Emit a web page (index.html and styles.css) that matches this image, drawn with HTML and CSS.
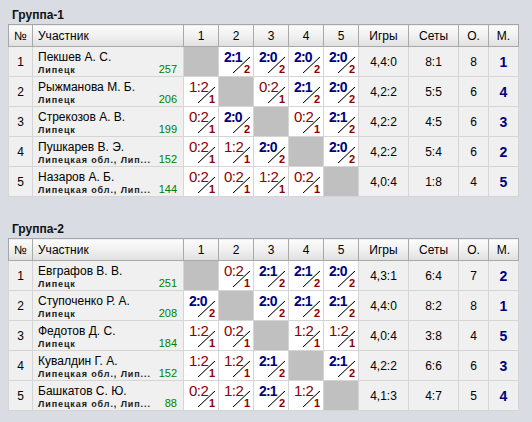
FILE: index.html
```html
<!DOCTYPE html>
<html lang="ru">
<head>
<meta charset="utf-8">
<title>Группы</title>
<link rel="stylesheet" href="styles.css">
</head>
<body>
<div class="page">
  <section class="group">
    <h2 class="title">Группа-1</h2>
    <table class="grid">
      <colgroup>
        <col class="c-num"><col class="c-name">
        <col class="c-sc"><col class="c-sc"><col class="c-sc"><col class="c-sc"><col class="c-sc">
        <col class="c-stat"><col class="c-stat"><col class="c-small"><col class="c-small">
      </colgroup>
      <thead>
        <tr><th>№</th><th class="h-name">Участник</th><th>1</th><th>2</th><th>3</th><th>4</th><th>5</th><th>Игры</th><th>Сеты</th><th>О.</th><th class="last">М.</th></tr>
      </thead>
      <tbody>
        <tr>
          <td class="num">1</td>
          <td class="player"><div class="pname">Пекшев А. С.</div><div class="pinfo"><span class="city">Липецк</span><span class="rating">257</span></div></td>
          <td class="self"></td>
          <td class="sc"><div class="cell win"><span class="res">2:1</span><span class="slash"></span><span class="pts">2</span></div></td>
          <td class="sc"><div class="cell win"><span class="res">2:0</span><span class="slash"></span><span class="pts">2</span></div></td>
          <td class="sc"><div class="cell win"><span class="res">2:0</span><span class="slash"></span><span class="pts">2</span></div></td>
          <td class="sc"><div class="cell win"><span class="res">2:0</span><span class="slash"></span><span class="pts">2</span></div></td>
          <td class="stat">4,4:0</td><td class="stat">8:1</td><td class="stat">8</td><td class="stat place">1</td>
        </tr>
        <tr>
          <td class="num">2</td>
          <td class="player"><div class="pname">Рыжманова М. Б.</div><div class="pinfo"><span class="city">Липецк</span><span class="rating">206</span></div></td>
          <td class="sc"><div class="cell loss"><span class="res">1:2</span><span class="slash"></span><span class="pts">1</span></div></td>
          <td class="self"></td>
          <td class="sc"><div class="cell loss"><span class="res">0:2</span><span class="slash"></span><span class="pts">1</span></div></td>
          <td class="sc"><div class="cell win"><span class="res">2:1</span><span class="slash"></span><span class="pts">2</span></div></td>
          <td class="sc"><div class="cell win"><span class="res">2:0</span><span class="slash"></span><span class="pts">2</span></div></td>
          <td class="stat">4,2:2</td><td class="stat">5:5</td><td class="stat">6</td><td class="stat place">4</td>
        </tr>
        <tr>
          <td class="num">3</td>
          <td class="player"><div class="pname">Стрекозов А. В.</div><div class="pinfo"><span class="city">Липецк</span><span class="rating">199</span></div></td>
          <td class="sc"><div class="cell loss"><span class="res">0:2</span><span class="slash"></span><span class="pts">1</span></div></td>
          <td class="sc"><div class="cell win"><span class="res">2:0</span><span class="slash"></span><span class="pts">2</span></div></td>
          <td class="self"></td>
          <td class="sc"><div class="cell loss"><span class="res">0:2</span><span class="slash"></span><span class="pts">1</span></div></td>
          <td class="sc"><div class="cell win"><span class="res">2:1</span><span class="slash"></span><span class="pts">2</span></div></td>
          <td class="stat">4,2:2</td><td class="stat">4:5</td><td class="stat">6</td><td class="stat place">3</td>
        </tr>
        <tr>
          <td class="num">4</td>
          <td class="player"><div class="pname">Пушкарев В. Э.</div><div class="pinfo"><span class="city">Липецкая обл., Лип...</span><span class="rating">152</span></div></td>
          <td class="sc"><div class="cell loss"><span class="res">0:2</span><span class="slash"></span><span class="pts">1</span></div></td>
          <td class="sc"><div class="cell loss"><span class="res">1:2</span><span class="slash"></span><span class="pts">1</span></div></td>
          <td class="sc"><div class="cell win"><span class="res">2:0</span><span class="slash"></span><span class="pts">2</span></div></td>
          <td class="self"></td>
          <td class="sc"><div class="cell win"><span class="res">2:0</span><span class="slash"></span><span class="pts">2</span></div></td>
          <td class="stat">4,2:2</td><td class="stat">5:4</td><td class="stat">6</td><td class="stat place">2</td>
        </tr>
        <tr>
          <td class="num">5</td>
          <td class="player"><div class="pname">Назаров А. Б.</div><div class="pinfo"><span class="city">Липецкая обл., Лип...</span><span class="rating">144</span></div></td>
          <td class="sc"><div class="cell loss"><span class="res">0:2</span><span class="slash"></span><span class="pts">1</span></div></td>
          <td class="sc"><div class="cell loss"><span class="res">0:2</span><span class="slash"></span><span class="pts">1</span></div></td>
          <td class="sc"><div class="cell loss"><span class="res">1:2</span><span class="slash"></span><span class="pts">1</span></div></td>
          <td class="sc"><div class="cell loss"><span class="res">0:2</span><span class="slash"></span><span class="pts">1</span></div></td>
          <td class="self"></td>
          <td class="stat">4,0:4</td><td class="stat">1:8</td><td class="stat">4</td><td class="stat place">5</td>
        </tr>
      </tbody>
    </table>
  </section>

  <section class="group">
    <h2 class="title">Группа-2</h2>
    <table class="grid">
      <colgroup>
        <col class="c-num"><col class="c-name">
        <col class="c-sc"><col class="c-sc"><col class="c-sc"><col class="c-sc"><col class="c-sc">
        <col class="c-stat"><col class="c-stat"><col class="c-small"><col class="c-small">
      </colgroup>
      <thead>
        <tr><th>№</th><th class="h-name">Участник</th><th>1</th><th>2</th><th>3</th><th>4</th><th>5</th><th>Игры</th><th>Сеты</th><th>О.</th><th class="last">М.</th></tr>
      </thead>
      <tbody>
        <tr>
          <td class="num">1</td>
          <td class="player"><div class="pname">Евграфов В. В.</div><div class="pinfo"><span class="city">Липецк</span><span class="rating">251</span></div></td>
          <td class="self"></td>
          <td class="sc"><div class="cell loss"><span class="res">0:2</span><span class="slash"></span><span class="pts">1</span></div></td>
          <td class="sc"><div class="cell win"><span class="res">2:1</span><span class="slash"></span><span class="pts">2</span></div></td>
          <td class="sc"><div class="cell win"><span class="res">2:1</span><span class="slash"></span><span class="pts">2</span></div></td>
          <td class="sc"><div class="cell win"><span class="res">2:0</span><span class="slash"></span><span class="pts">2</span></div></td>
          <td class="stat">4,3:1</td><td class="stat">6:4</td><td class="stat">7</td><td class="stat place">2</td>
        </tr>
        <tr>
          <td class="num">2</td>
          <td class="player"><div class="pname">Ступоченко Р. А.</div><div class="pinfo"><span class="city">Липецк</span><span class="rating">208</span></div></td>
          <td class="sc"><div class="cell win"><span class="res">2:0</span><span class="slash"></span><span class="pts">2</span></div></td>
          <td class="self"></td>
          <td class="sc"><div class="cell win"><span class="res">2:0</span><span class="slash"></span><span class="pts">2</span></div></td>
          <td class="sc"><div class="cell win"><span class="res">2:1</span><span class="slash"></span><span class="pts">2</span></div></td>
          <td class="sc"><div class="cell win"><span class="res">2:1</span><span class="slash"></span><span class="pts">2</span></div></td>
          <td class="stat">4,4:0</td><td class="stat">8:2</td><td class="stat">8</td><td class="stat place">1</td>
        </tr>
        <tr>
          <td class="num">3</td>
          <td class="player"><div class="pname">Федотов Д. С.</div><div class="pinfo"><span class="city">Липецк</span><span class="rating">184</span></div></td>
          <td class="sc"><div class="cell loss"><span class="res">1:2</span><span class="slash"></span><span class="pts">1</span></div></td>
          <td class="sc"><div class="cell loss"><span class="res">0:2</span><span class="slash"></span><span class="pts">1</span></div></td>
          <td class="self"></td>
          <td class="sc"><div class="cell loss"><span class="res">1:2</span><span class="slash"></span><span class="pts">1</span></div></td>
          <td class="sc"><div class="cell loss"><span class="res">1:2</span><span class="slash"></span><span class="pts">1</span></div></td>
          <td class="stat">4,0:4</td><td class="stat">3:8</td><td class="stat">4</td><td class="stat place">5</td>
        </tr>
        <tr>
          <td class="num">4</td>
          <td class="player"><div class="pname">Кувалдин Г. А.</div><div class="pinfo"><span class="city">Липецкая обл., Лип...</span><span class="rating">152</span></div></td>
          <td class="sc"><div class="cell loss"><span class="res">1:2</span><span class="slash"></span><span class="pts">1</span></div></td>
          <td class="sc"><div class="cell loss"><span class="res">1:2</span><span class="slash"></span><span class="pts">1</span></div></td>
          <td class="sc"><div class="cell win"><span class="res">2:1</span><span class="slash"></span><span class="pts">2</span></div></td>
          <td class="self"></td>
          <td class="sc"><div class="cell win"><span class="res">2:1</span><span class="slash"></span><span class="pts">2</span></div></td>
          <td class="stat">4,2:2</td><td class="stat">6:6</td><td class="stat">6</td><td class="stat place">3</td>
        </tr>
        <tr>
          <td class="num">5</td>
          <td class="player"><div class="pname">Башкатов С. Ю.</div><div class="pinfo"><span class="city">Липецкая обл., Лип...</span><span class="rating">88</span></div></td>
          <td class="sc"><div class="cell loss"><span class="res">0:2</span><span class="slash"></span><span class="pts">1</span></div></td>
          <td class="sc"><div class="cell loss"><span class="res">1:2</span><span class="slash"></span><span class="pts">1</span></div></td>
          <td class="sc"><div class="cell win"><span class="res">2:1</span><span class="slash"></span><span class="pts">2</span></div></td>
          <td class="sc"><div class="cell loss"><span class="res">1:2</span><span class="slash"></span><span class="pts">1</span></div></td>
          <td class="self"></td>
          <td class="stat">4,1:3</td><td class="stat">4:7</td><td class="stat">5</td><td class="stat place">4</td>
        </tr>
      </tbody>
    </table>
  </section>
</div>
</body>
</html>
```

FILE: styles.css
```css
html, body {
  margin: 0;
  padding: 0;
}
body {
  background: #d9dce3;
  font-family: "Liberation Sans", Arial, sans-serif;
  font-size: 12px;
  color: #000;
}
.page {
  padding: 7px 0 0 8px;
}
.group + .group {
  margin-top: 24px;
}
.title {
  margin: 0 0 1px 4px;
  font-size: 12px;
  font-weight: bold;
  line-height: 16px;
  height: 16px;
  color: #111;
}
.grid {
  border-collapse: collapse;
  table-layout: fixed;
  width: 510px;
  border: 1px solid #a6a6a6;
}
.c-num { width: 24px; }
.c-name { width: 151px; }
.c-sc { width: 35px; }
.c-stat { width: 50px; }
.c-small { width: 30px; }

.grid th {
  height: 21px;
  padding: 0;
  font-weight: normal;
  font-size: 12px;
  text-align: center;
  background: linear-gradient(#fcfcfc, #f0f0f0 50%, #e0e0e0);
  border-right: 1px solid #a9a9a9;
  border-bottom: 1px solid #a9a9a9;
  color: #000;
}
.grid th.h-name {
  text-align: left;
  padding-left: 5px;
}
.grid td {
  height: 29px;
  padding: 0;
  border: 1px solid #d5d5d5;
  background: #f0f0f0;
}
.num {
  text-align: center;
  vertical-align: middle;
}
.grid td.player {
  vertical-align: top;
  padding: 0 6px 0 5px;
}
.pname {
  padding-top: 3px;
  line-height: 14px;
  white-space: nowrap;
}
.pinfo {
  display: flex;
  justify-content: space-between;
  align-items: baseline;
  line-height: 11px;
}
.city {
  font-size: 9px;
  font-weight: bold;
  letter-spacing: 0.9px;
  color: #1a1a1a;
  white-space: nowrap;
}
.rating {
  font-size: 11px;
  color: #008000;
}
.grid td.self {
  background: #c0c0c0;
}
.grid td.sc {
  background: #fff;
  vertical-align: top;
}
.cell {
  position: relative;
  height: 29px;
}
.res {
  display: block;
  padding: 3px 0 0 5px;
  font-size: 15px;
  line-height: 14px;
}
.win .res {
  font-size: 14px;
  font-weight: bold;
  color: #000080;
  letter-spacing: -0.8px;
}
.loss .res {
  color: #8b0000;
  letter-spacing: -0.5px;
}
.slash {
  position: absolute;
  left: 14px;
  top: 10px;
  width: 17px;
  height: 16px;
  background: linear-gradient(to bottom right, transparent calc(50% - 0.8px), #000 50%, transparent calc(50% + 0.8px));
}
.pts {
  position: absolute;
  right: 3px;
  bottom: 2px;
  font-size: 11px;
  line-height: 10px;
  font-weight: bold;
  color: #8b0000;
}
.stat {
  text-align: center;
  vertical-align: middle;
}
.place {
  font-size: 14px;
  font-weight: bold;
  color: #000080;
}
```
